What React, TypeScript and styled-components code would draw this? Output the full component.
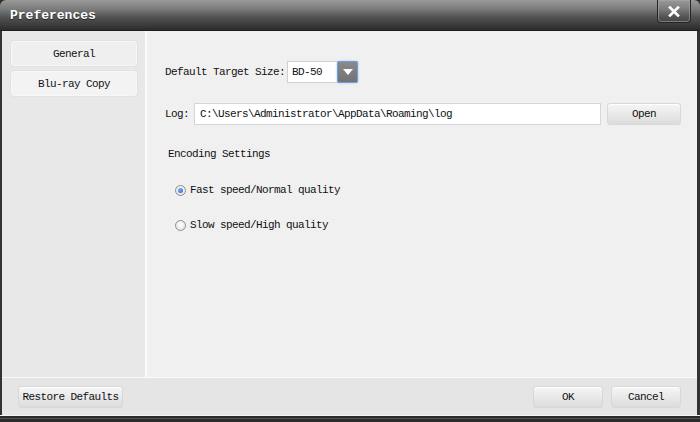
import React, { useState } from "react";
import styled, { createGlobalStyle } from "styled-components";

const Global = createGlobalStyle`
  html, body { margin: 0; padding: 0; background: #2e2e2e; }
  body { font-family: "Liberation Mono", "DejaVu Sans Mono", monospace; }
  * { box-sizing: border-box; }
`;

const Window = styled.div`
  width: 700px;
  height: 422px;
  display: flex;
  flex-direction: column;
  background: #333;
  border-radius: 6px 6px 0 0;
  overflow: hidden;
  font-family: "Liberation Mono", monospace;
  font-size: 11px;
  letter-spacing: -0.6px;
  color: #111;
`;

const TitleBar = styled.div`
  height: 31px;
  flex: none;
  display: flex;
  align-items: flex-start;
  justify-content: space-between;
  background: linear-gradient(#9a9a9a 0%, #7c7c7c 30%, #555 55%, #3a3a3a 85%, #2b2b2b 100%);
  border-bottom: 1px solid #1e1e1e;
  padding: 0 9px 0 10px;
`;

const Title = styled.div`
  font-weight: bold;
  font-size: 13px;
  letter-spacing: 0;
  color: #fff;
  line-height: 30px;
  margin-top: 1px;
  text-shadow: 0 1px 0 #222;
`;

const CloseButton = styled.div`
  width: 34px;
  height: 23px;
  display: flex;
  align-items: center;
  justify-content: center;
  border: 1px solid #262626;
  border-top: none;
  border-radius: 0 0 4px 4px;
  box-shadow: inset 0 0 0 1px rgba(170, 170, 170, 0.55);
`;

const Body = styled.div`
  flex: 1;
  margin: 0 3px 0 2px;
  display: flex;
  flex-direction: column;
  min-height: 0;
`;

const Main = styled.div`
  flex: 1;
  display: flex;
  min-height: 0;
`;

const Sidebar = styled.div`
  width: 145px;
  flex: none;
  background: #e8e8e8;
  border-right: 2px solid #fbfbfb;
  padding: 10px 0 0 9px;
  display: flex;
  flex-direction: column;
  gap: 5px;
`;

const Tab = styled.div<{ $active?: boolean }>`
  width: 126px;
  height: 25px;
  display: flex;
  align-items: center;
  justify-content: center;
  background: ${(p) => (p.$active ? "#f3f3f3" : "#efefef")};
  border: 1px solid #f7f7f7;
  border-radius: 3px;
  box-shadow: 0 0 0 1px #e2e2e2;
`;

const Content = styled.div`
  flex: 1;
  background: #f0f0f0;
  padding: 30px 16px 0 18px;
  display: flex;
  flex-direction: column;
`;

const Row = styled.div<{ $mt?: number }>`
  display: flex;
  align-items: center;
  margin-top: ${(p) => p.$mt ?? 0}px;
`;

const Label = styled.span<{ $ml?: number }>`
  white-space: pre;
  margin-left: ${(p) => p.$ml ?? 0}px;
`;

const Select = styled.div`
  margin-left: 2px;
  width: 71px;
  height: 22px;
  display: flex;
  background: #fff;
  border: 1px solid #cfcfcf;
`;

const SelectText = styled.div`
  flex: 1;
  padding-left: 4px;
  display: flex;
  align-items: center;
`;

const SelectArrow = styled.div`
  width: 21px;
  margin: -1px -1px -1px 0;
  background: linear-gradient(#8a8a8a, #727272);
  border: 1px solid #6d9ee0;
  border-radius: 2px;
  box-shadow: 0 0 2px #8bb8f0;
  display: flex;
  align-items: center;
  justify-content: center;
`;

const Input = styled.div`
  margin-left: 5px;
  width: 407px;
  height: 22px;
  background: #fff;
  border: 1px solid #d6d6d6;
  padding-left: 5px;
  display: flex;
  align-items: center;
`;

const Button = styled.div<{ $w: number }>`
  width: ${(p) => p.$w}px;
  height: 22px;
  display: flex;
  align-items: center;
  justify-content: center;
  background: linear-gradient(#f6f6f6, #e9e9e9 50%, #dcdcdc);
  border: 1px solid #d8d8d8;
  border-radius: 3px;
  box-shadow: inset 0 1px 0 #fff;
`;

const RadioRow = styled.label<{ $mt: number }>`
  display: flex;
  align-items: center;
  margin-top: ${(p) => p.$mt}px;
  margin-left: 10px;
  gap: 4px;
  cursor: default;
`;

const RadioCircle = styled.span<{ $checked: boolean }>`
  width: 11px;
  height: 11px;
  border-radius: 50%;
  border: 1px solid #8e8f8f;
  background: radial-gradient(circle at 50% 40%, #fff, #dcdcdc);
  display: flex;
  align-items: center;
  justify-content: center;
  &::after {
    content: "";
    width: 5px;
    height: 5px;
    border-radius: 50%;
    background: ${(p) => (p.$checked ? "radial-gradient(circle at 40% 35%, #7fb2f0, #1f5fc4)" : "transparent")};
  }
`;

const BottomBar = styled.div`
  height: 38px;
  flex: none;
  background: #e5e5e5;
  border-top: 1px solid #fafafa;
  padding: 1px 16px 0;
  display: flex;
  align-items: center;
  gap: 8px;
`;

const Spacer = styled.div`
  flex: 1;
`;

const BottomFrame = styled.div`
  height: 7px;
  flex: none;
  background: linear-gradient(#f4f4f4 0px, #f4f4f4 1px, #2a2a2a 1px, #2a2a2a 3px, #555 3px, #555 4px, #2c2c2c 4px);
`;

export default function App() {
  const [mode, setMode] = useState(0);
  return (
    <>
      <Global />
      <Window>
        <TitleBar>
          <Title>Preferences</Title>
          <CloseButton>
            <svg width="12" height="11" viewBox="0 0 12 11">
              <path d="M2 1.5 L10 9.5 M10 1.5 L2 9.5" stroke="#fff" strokeWidth="2.6" strokeLinecap="square" />
            </svg>
          </CloseButton>
        </TitleBar>
        <Body>
          <Main>
            <Sidebar>
              <Tab>General</Tab>
              <Tab $active>Blu-ray Copy</Tab>
            </Sidebar>
            <Content>
              <Row>
                <Label>Default Target Size:</Label>
                <Select>
                  <SelectText>BD-50</SelectText>
                  <SelectArrow>
                    <svg width="10" height="6" viewBox="0 0 10 6">
                      <path d="M0 0 H10 L5 6 Z" fill="#fff" />
                    </svg>
                  </SelectArrow>
                </Select>
              </Row>
              <Row $mt={20}>
                <Label>Log:</Label>
                <Input>C:\Users\Administrator\AppData\Roaming\log</Input>
                <Spacer />
                <Button $w={74}>Open</Button>
              </Row>
              <Row $mt={23}>
                <Label $ml={3}>Encoding Settings</Label>
              </Row>
              <RadioRow $mt={24} onClick={() => setMode(0)}>
                <RadioCircle $checked={mode === 0} />
                <span>Fast speed/Normal quality</span>
              </RadioRow>
              <RadioRow $mt={23} onClick={() => setMode(1)}>
                <RadioCircle $checked={mode === 1} />
                <span>Slow speed/High quality</span>
              </RadioRow>
            </Content>
          </Main>
          <BottomBar>
            <Button $w={105}>Restore Defaults</Button>
            <Spacer />
            <Button $w={70}>OK</Button>
            <Button $w={70}>Cancel</Button>
          </BottomBar>
        </Body>
        <BottomFrame />
      </Window>
    </>
  );
}
